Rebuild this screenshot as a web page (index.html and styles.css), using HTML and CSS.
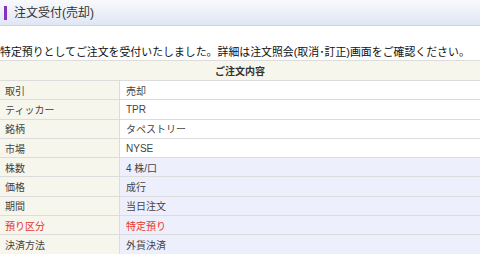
FILE: index.html
```html
<!doctype html>
<html lang="ja">
<head>
    <meta charset="utf-8">
    <link rel="stylesheet" href="styles.css">
    <title>注文受付(売却)</title>
</head>
<body>
    <div class="title-bar">
        <h1 class="title">注文受付(売却)</h1>
    </div>

    <p class="message">特定預りとしてご注文を受付いたしました。詳細は注文照会(取消･訂正)画面をご確認ください。</p>

    <table class="order">
        <thead>
            <tr><th colspan="2">ご注文内容</th></tr>
        </thead>
        <tbody>
            <tr><td class="label">取引</td><td class="value">売却</td></tr>
            <tr><td class="label">ティッカー</td><td class="value">TPR</td></tr>
            <tr><td class="label">銘柄</td><td class="value">タペストリー</td></tr>
            <tr><td class="label">市場</td><td class="value">NYSE</td></tr>
            <tr class="input"><td class="label">株数</td><td class="value">4 株/口</td></tr>
            <tr class="input"><td class="label">価格</td><td class="value">成行</td></tr>
            <tr class="input"><td class="label">期間</td><td class="value">当日注文</td></tr>
            <tr class="input alert"><td class="label">預り区分</td><td class="value">特定預り</td></tr>
            <tr class="input"><td class="label">決済方法</td><td class="value">外貨決済</td></tr>
        </tbody>
    </table>
</body>
</html>
```

FILE: styles.css
```css
html, body {
    height: 100%;
}
body {
    margin: 0;
    padding: 0;
    background: #fff;
    color: #333;
    font-family: "Liberation Sans", Arial, "Noto Sans CJK JP", sans-serif;
    overflow: hidden;
}
.title-bar {
    height: 25px;
    border-bottom: 1px solid #d4d4d4;
    background: linear-gradient(#f8f9fc, #dfe6f4);
    display: flex;
    align-items: center;
    padding-left: 4px;
}
.title {
    margin: 0;
    font-size: 12px;
    font-weight: normal;
    color: #333;
    line-height: 14px;
    border-left: 3px solid #8a2fc4;
    padding-left: 7px;
}
.message {
    margin: 20px 0 0;
    font-size: 10.9px;
    line-height: 13px;
    color: #111;
    white-space: nowrap;
}
.order {
    margin-top: 1px;
    width: 100%;
    border-collapse: collapse;
    font-size: 10px;
}
.order th {
    height: 19px;
    background: #f7f6ec;
    border-top: 1px solid #dcdcdc;
    border-bottom: 1px solid #dcdcdc;
    font-weight: bold;
    color: #333;
    text-align: center;
    padding: 0;
}
.order td {
    height: 18.3px;
    border-bottom: 1px solid #dcdcdc;
    padding: 0 0 0 5px;
    color: #444;
}
.order .label {
    width: 114px;
    background: #f7f6ec;
    border-right: 1px solid #dcdcdc;
}
.order .value {
    background: #fff;
    padding-left: 6px;
}
.order .input .value {
    background: #eeeffd;
}
.order .alert td {
    color: #e8332e;
}
```
